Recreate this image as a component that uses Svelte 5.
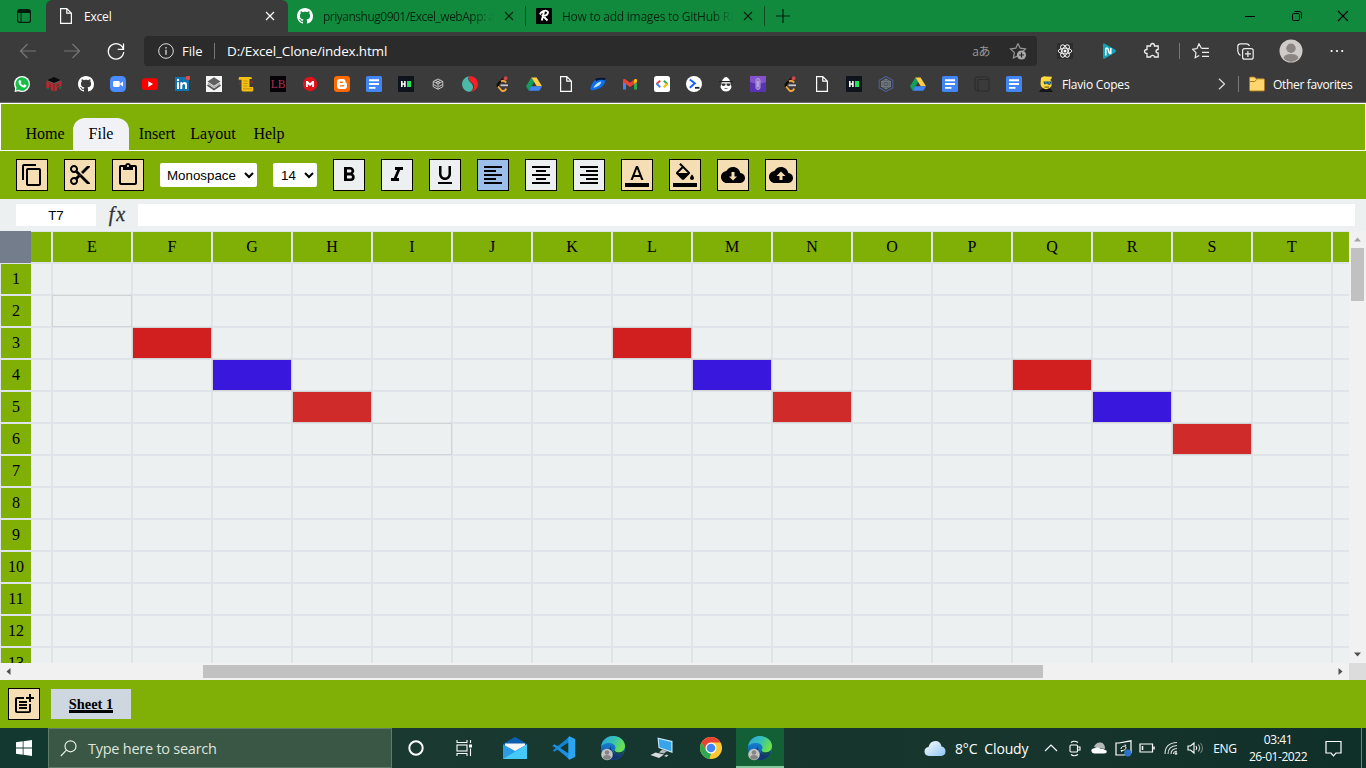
<script>
  const gh = '<path fill="currentColor" d="M8 0C3.58 0 0 3.58 0 8c0 3.54 2.29 6.53 5.47 7.59.4.07.55-.17.55-.38 0-.19-.01-.82-.01-1.49-2.01.37-2.53-.49-2.69-.94-.09-.23-.48-.94-.82-1.13-.28-.15-.68-.52-.01-.53.63-.01 1.08.58 1.23.82.72 1.21 1.87.87 2.33.66.07-.52.28-.87.51-1.07-1.78-.2-3.64-.89-3.64-3.95 0-.87.31-1.59.82-2.15-.08-.2-.36-1.02.08-2.12 0 0 .67-.21 2.2.82.64-.18 1.32-.27 2-.27s1.36.09 2 .27c1.53-1.04 2.2-.82 2.2-.82.44 1.1.16 1.92.08 2.12.51.56.82 1.27.82 2.15 0 3.07-1.87 3.75-3.65 3.95.29.25.54.73.54 1.48 0 1.07-.01 1.93-.01 2.2 0 .21.15.46.55.38A8.01 8.01 0 0 0 16 8c0-4.42-3.58-8-8-8z"/>';
  const page = '<path fill="none" stroke="#fff" stroke-width="1.2" d="M2.6.6h6.2l4.6 4.6v10.200H2.600zM8.800.6v4.600h4.600"/>';
  const docs = '<rect width="16" height="16" rx="1.500" fill="#4285f4"/><path stroke="#fff" stroke-width="1.900" d="M3 4.200h10M3 8h10M3 11.900h6.500"/>';
  const drive = '<path fill="#12a05c" d="M5.400 1.500 8 6 2.800 14.800 0 10.300z"/><path fill="#ffcf48" d="M5.400 1.500h5.200L16 10.300h-5.200z"/><path fill="#4285f4" d="M5.200 10.300H16l-2.700 4.500H2.800z"/>';
  const leet = '<path fill="none" stroke="#0a0a0a" stroke-width="2" d="M11 1 4.500 7.500Q2.800 9.500 4 11"/><path fill="none" stroke="#f2a33a" stroke-width="1.900" d="m4 10.500 3.200 3.700q2 1.800 4-.2l1.200-1.300M7 5.500q2.500-1.800 5.200 1"/><path stroke="#c8c8c8" stroke-width="1.800" d="M6.500 9.300h7.500"/><circle cx="11.500" cy="2.300" r="2" fill="#d24848"/>';
  const hr = '<rect width="16" height="16" fill="#0e141e"/><path fill="#fff" d="M3 5h1.600v2.200h1.500V5h1.600v6H6.100V8.700H4.600V11H3z"/><rect x="9" y="5" width="4" height="6" fill="#1ee65a"/>';

  const bookmarks = [
    '<circle cx="8" cy="8" r="8" fill="#fff"/><path fill="#fff" d="M.5 16 1.500 11l4 4z"/><path fill="#16bd4a" d="M8 1.300a6.700 6.700 0 1 1-3.300 12.500l-3 .8.9-2.900A6.700 6.700 0 0 1 8 1.300z"/><path fill="#fff" d="M5.500 4.200q.8-.4 1.200.2l.7 1.700-.8 1q1 1.800 2.800 2.400l1-1.200 2 1q.2 1.500-1.400 2.200c-2.500.6-6.500-2.800-6.500-5.200 0-.9.500-1.700 1-2.100z"/>',
    '<path fill="#0b0b0b" d="m8 1 7 3.200L8 7 1 4.200z"/><path fill="#b8282e" d="M.3 5 7.600 8v7.600l-2.700-1.400v-3l-1.800-.8v3L.3 12zM15.700 5 8.400 8v7.600l2.600-1.300v-2.500l4.700-2.200z"/><path fill="#3b3b3b" d="m3 8 2.200.9v1L3 9zM10.500 9l2.500-1v1.500l-2.500 1z"/><path fill="#1a6b3c" d="m.3 12 2.800 1.400v-1.500zM13 11v2.600l2.700-1.500V10z"/><path stroke="#888" stroke-width=".5" fill="none" d="m1 4.500 7 3 7-3"/>',
    gh,
    '<rect width="16" height="16" rx="4.500" fill="#4a8cff"/><rect x="3" y="5" width="6.800" height="6" rx="1.400" fill="#fff"/><path fill="#fff" d="m10.200 7.500 2.800-2v5l-2.800-2z"/>',
    '<rect y="2.300" width="16" height="11.600" rx="3" fill="#f00"/><path fill="#fff" d="m6.300 5.300 4.700 2.800-4.700 2.800z"/>',
    '<rect x="1" y="1" width="14" height="14" fill="#1173b0"/><path fill="#fff" d="M3 6.300h2V13H3zM6.300 6.300h1.900v.9q1-1.100 2.500-1.100 2.300 0 2.300 2.800V13h-2V9.500q0-1.600-1.200-1.600T8.300 9.500V13h-2z"/><circle cx="4" cy="4" r="1.200" fill="#fff"/><circle cx="14" cy="2" r="2.300" fill="#e8453c"/>',
    '<rect width="16" height="16" fill="#f5f5f5"/><path fill="#5f5f5f" d="m8 1.200 6.500 4.300L8 9.800 1.500 5.500z"/><path fill="none" stroke="#555" stroke-width="1.600" d="m1.500 9 6.500 4.500L14.500 9"/><path fill="#aaa" d="m2 6.500 6 4 6-4v1.500l-6 4-6-4z"/>',
    '<path fill="#f4c013" d="M1 1h11.500q1.500 0 1.500 2h-2.500v8H15q1 4.500-1 4.500H5q-1.500 0-1.500-2V4H.7z"/><path stroke="#a87300" stroke-width=".6" fill="none" d="M5.500 5h4M5.500 7.500h4M5.500 10h4M5 12.800h9M1 3.800h3"/><path fill="#a02030" d="M13 5h2v2h-2zM1 7h1.500v1.500H1z"/>',
    '<rect width="16" height="16" fill="#050305"/><text x="8" y="12.200" text-anchor="middle" font-family="Liberation Serif, serif" font-size="11.500" fill="#b0305a">LB</text>',
    '<circle cx="8" cy="8" r="7.200" fill="#e3131b"/><path fill="#fff" d="M4 11V5h1.800L8 7.300 10.200 5H12v6h-1.800V8L8 10.200 5.800 8v3z"/>',
    '<rect width="16" height="16" rx="3" fill="#ff6a00"/><path fill="#fff" fill-rule="evenodd" d="M6 3h2.800C11 3 11.600 4.500 11.600 6.500q1.400.2 1.400 1.500v2.500c0 1.500-1 2.500-2.500 2.500h-5C4 13 3 12 3 10.500v-5C3 4 4 3 6 3zm0 2.600v1.300h2.800V5.600zM6 9.300v1.300h4.200V9.300z"/>',
    docs, hr,
    '<path fill="none" stroke="#d6d6d6" stroke-width=".9" d="m8 3 4.800 2.500v5.200L8 13.300l-4.800-2.600V5.500zM3.500 5.500 8 8l4.500-2.500M8 8v5M5.500 4.300 10 6.800M10.500 4.300 6 6.800M3.500 8.500 7 10.500M12.500 8.500 9 10.500"/>',
    '<path fill="#4cb8a8" d="M7 .2C2 1-.5 5.500.2 9.500 1 14 5 16 8 15.800 11.500 14 12 10 9.500 7.500S5 4 7 .2z"/><path fill="#fb1d24" d="M7.500.1C13 0 16.500 4.500 15.900 9c-.5 4-4 6.600-7 6.800 4-3 4-6.800 1.100-9S6 3 7.500.1z"/>',
    leet, drive, page,
    '<path fill="#0c6ff0" d="M.5 12Q3 2.500 11 2.300h5Q15 10 9 12.500t-8.500 1.200z"/><path fill="#06183a" d="M5 3q4-2 11-1l-1 2.500Q12 3 6 5z"/><path fill="#bfe6ff" d="M3.500 12Q5.500 6.500 11.500 5.500q-1 4.500-8 6.500z"/>',
    '<path fill="#4285f4" d="M1 4v9.500h3V7z"/><path fill="#34a853" d="M12 7v6.500h3V4z"/><path fill="#ea4335" d="M1 4.300Q1 2.500 3 3l5 3.700L13 3q2-.5 2 1.300v2L8 11 1 6.300z"/><path fill="#fbbc04" d="M12 4v3.800l3-2V4q-.5-1.500-2-1z"/>',
    '<rect width="16" height="16" rx="2.500" fill="#fff"/><path fill="none" stroke-width="2" stroke="#ea4335" d="M6.200 4.800 2.500 8"/><path fill="none" stroke-width="2" stroke="#4285f4" d="m2.500 7.500 3.700 3.700"/><path fill="none" stroke-width="2" stroke="#34a853" d="M9.800 4.800 13.500 8"/><path fill="none" stroke-width="2" stroke="#fbbc04" d="m13.500 7.500-3.700 3.700"/>',
    '<circle cx="8" cy="8" r="8" fill="#fff"/><path fill="none" stroke="#1463ff" stroke-width="2" d="m3.800 3.500 5 3.800-5 4.500"/><path stroke="#20242f" stroke-width="1.800" d="M9 11.800h4.500"/>',
    '<path fill="#fff" d="M4 5q4-8 8 0l1.500 6Q12 15.500 8 15.500T2.500 11z"/><path fill="#222" d="M1 5h14v1.200H1z"/><path fill="#333" d="M3.500 7.500h4v1.500q-2 2-4 0zM8.500 7.500h4v1.500q-2 2-4 0z"/><path stroke="#555" stroke-width=".8" d="M6.500 12.500h3"/>',
    '<rect width="16" height="16" fill="#5a33b5"/><path fill="#8453cc" d="M0 0h16v6q-8 3-16 0z"/><rect x="6" y="2.500" width="4" height="11" rx="2" fill="#8d74c8" stroke="#b9a4dc" stroke-width=".9"/><path stroke="#d5c8ec" d="M8 5v6"/>',
    leet, page, hr,
    '<path fill="none" stroke="#4c5f8f" stroke-width="1.100" d="m8 .5 6.800 3.800v7.500L8 15.500l-6.800-3.700V4.300z"/><path fill="none" stroke="#77808c" stroke-width=".8" d="m8 3 4.500 2.500v5L8 13l-4.500-2.500v-5zM3.500 5.500l9 5M12.500 5.500l-9 5M8 3v10M3.500 5.500h9l-4.500 7.500zM8 3l-4.500 7.500h9z"/>',
    drive, docs,
    '<path fill="none" stroke="#2d2d2d" stroke-width="1.200" d="M2.500 1h10q1.500 0 2.500 2v10q0 2-2 2H4q-3-1-3-3V3q0-2 1.500-2zM4 3.500h10M4 3.500v11"/>',
    docs,
    '<path fill="#151515" d="M1 16q2-4 7-4t7 4z"/><path fill="#ffd83b" d="M3 2q2-2.500 5.500-1.500L14 .8q-.5 3-2 3.200l1.500 1v5Q11 14 7 13 3 12 2.500 8z"/><path fill="#1b4f7a" d="M5.500 5.500h8v1l-1.500 2.200h-2L9 7.300l-1 1H6.200z"/><path fill="#3fa9e0" d="M7 6.300h1.500v1H7zM10.500 6.300H12v1.200h-1.500z"/><path fill="#7a5c10" d="M6.500 10.500h4.500v1.200H6.500z"/>'
  ];

  const tools = {
    copy: 'M16 1H4c-1.100 0-2 .9-2 2v14h2V3h12V1zm3 4H8c-1.100 0-2 .9-2 2v14c0 1.100.9 2 2 2h11c1.100 0 2-.9 2-2V7c0-1.100-.9-2-2-2zm0 16H8V7h11v14z',
    cut: 'M9.640 7.640c.23-.5.36-1.050.36-1.640 0-2.210-1.790-4-4-4S2 3.790 2 6s1.790 4 4 4c.59 0 1.140-.13 1.640-.36L10 12l-2.360 2.360C7.140 14.130 6.590 14 6 14c-2.210 0-4 1.790-4 4s1.790 4 4 4 4-1.790 4-4c0-.59-.13-1.140-.36-1.640L12 14l7 7h3v-1L9.640 7.640zM6 8c-1.100 0-2-.89-2-2s.9-2 2-2 2 .89 2 2-.9 2-2 2zm0 12c-1.100 0-2-.89-2-2s.9-2 2-2 2 .89 2 2-.9 2-2 2zm6-7.500c-.28 0-.5-.22-.5-.5s.22-.5.5-.5.5.22.5.5-.22.5-.5.5zM19 3l-6 6 2 2 7-7V3z',
    paste: 'M19 2h-4.180C14.400.84 13.300 0 12 0c-1.300 0-2.400.84-2.820 2H5c-1.100 0-2 .9-2 2v16c0 1.100.9 2 2 2h14c1.100 0 2-.9 2-2V4c0-1.100-.9-2-2-2zm-7 0c.55 0 1 .45 1 1s-.45 1-1 1-1-.45-1-1 .45-1 1-1zm7 18H5V4h2v3h10V4h2v16z',
    bold: 'M15.600 10.790c.97-.67 1.650-1.770 1.650-2.790 0-2.260-1.750-4-4-4H7v14h7.040c2.090 0 3.710-1.700 3.710-3.790 0-1.520-.86-2.820-2.150-3.420zM10 6.500h3c.83 0 1.500.67 1.500 1.500s-.67 1.500-1.500 1.500h-3v-3zm3.500 9H10v-3h3.500c.83 0 1.500.67 1.500 1.500s-.67 1.500-1.500 1.500z',
    italic: 'M10 4v3h2.210l-3.420 8H6v3h8v-3h-2.210l3.420-8H18V4z',
    underline: 'M12 17c3.310 0 6-2.690 6-6V3h-2.500v8c0 1.930-1.570 3.500-3.500 3.500S8.500 12.930 8.500 11V3H6v8c0 3.310 2.690 6 6 6zm-7 2v2h14v-2H5z',
    left: 'M15 15H3v2h12v-2zm0-8H3v2h12V7zM3 13h18v-2H3v2zm0 8h18v-2H3v2zM3 3v2h18V3H3z',
    center: 'M7 15v2h10v-2H7zm-4 6h18v-2H3v2zm0-8h18v-2H3v2zm4-6v2h10V7H7zM3 3v2h18V3H3z',
    right: 'M3 21h18v-2H3v2zm6-4h12v-2H9v2zm-6-4h18v-2H3v2zm6-4h12V7H9v2zM3 3v2h18V3H3z',
    color: 'M11 3L5.500 17h2.250l1.120-3h6.250l1.120 3h2.250L13 3h-2zm-1.380 9L12 5.670 14.380 12H9.620zM0 20h24v4H0z',
    fill: 'M16.560 8.940L7.620 0 6.210 1.410l2.380 2.380-5.150 5.150c-.59.59-.59 1.540 0 2.120l5.500 5.500c.29.29.68.44 1.060.44s.77-.15 1.060-.44l5.500-5.500c.59-.58.59-1.530 0-2.120zM5.210 10L10 5.210 14.790 10H5.210zM19 11.500s-2 2.170-2 3.500c0 1.100.9 2 2 2s2-.9 2-2c0-1.330-2-3.500-2-3.500zM0 20h24v4H0z',
    download: 'M19.350 10.040C18.670 6.590 15.640 4 12 4 9.110 4 6.600 5.640 5.350 8.040 2.340 8.360 0 10.910 0 14c0 3.310 2.690 6 6 6h13c2.760 0 5-2.240 5-5 0-2.640-2.050-4.780-4.650-4.960zM16 13.500l-4 4-4-4h2.500V9h3v4.500z',
    upload: 'M19.350 10.040C18.670 6.590 15.640 4 12 4 9.110 4 6.600 5.640 5.350 8.040 2.340 8.360 0 10.910 0 14c0 3.310 2.690 6 6 6h13c2.760 0 5-2.240 5-5 0-2.640-2.050-4.780-4.650-4.960zM13.500 13v4h-3v-4H7.500L12 8.500l4.500 4.500z',
    add: 'M17 19.220H5V7h7V5H5c-1.100 0-2 .9-2 2v12c0 1.100.9 2 2 2h12c1.100 0 2-.9 2-2v-7h-2v7.220zM19 2h-2v3h-3c.01.01 0 2 0 2h3v2.990c.01.01 2 0 2 0V7h3V5h-3V2zM7 9h8v2H7zM7 12v2h8v-2h-3zM7 15h8v2H7z'
  };

  const cols = ['D', ...'EFGHIJKLMNOPQRST', 'U'];
  const rows = Array.from({ length: 13 }, (_, i) => i + 1);
  const cells = {
    E2: 'seen', I6: 'seen',
    F3: 'red', L3: 'red', Q4: 'red',
    G4: 'blue', M4: 'blue', R5: 'blue',
    H5: 'brick', N5: 'brick', S6: 'brick'
  };
  const menus = ['Home', 'File', 'Insert', 'Layout', 'Help'];
</script>

{#snippet tool(name, kind)}
  <button class="tool {kind}" aria-label={name}><svg width="24" height="24" viewBox="0 0 24 24"><path d={tools[name]} /></svg></button>
{/snippet}

{#snippet close(color)}
  <svg class="x" width="10" height="10" viewBox="0 0 10 10"><path d="m1 1 8 8M9 1 1 9" stroke={color} stroke-width="1.200" /></svg>
{/snippet}

{#snippet edge()}
  <svg width="26" height="26" viewBox="0 0 26 26">
    <defs>
      <linearGradient id="ea" x1="0" y1="0" x2="1" y2=".4"><stop offset="0" stop-color="#2aa5e0" /><stop offset=".55" stop-color="#35c1b4" /><stop offset="1" stop-color="#6be04c" /></linearGradient>
      <linearGradient id="eb" x1="0" y1="0" x2="0" y2="1"><stop offset="0" stop-color="#1b8fe0" /><stop offset="1" stop-color="#0c4fa4" /></linearGradient>
    </defs>
    <circle cx="13" cy="13" r="12" fill="url(#eb)" />
    <path fill="url(#ea)" d="M1 12C2 5 7 1 13 1c7 0 12 4.600 12 10 0 4-3 6.500-6.500 6.500-3 0-4.500-1.500-3.800-2.700C17 12 14 8 9.500 8 5.500 8 2 9.500 1 12z" />
    <path fill="#14376f" d="M11 11c-1 4 2 8 8 8.500 2 0 3.500-.5 4.500-1-2 3.500-6 6.500-10 6.500C8 24 7.500 15 11 11z" />
    <path fill="#16483a" d="M14.500 15.500q1 2 4 2 3.500 0 5.500-2l-1 3q-4 2-7 0t-1.500-3z" />
    <circle cx="7" cy="19.500" r="5.800" fill="#c4c4c4" /><circle cx="7" cy="17.500" r="2.300" fill="#858585" /><path fill="#858585" d="M3 23q0-3 4-3t4 3q-4 3.500-8 0z" />
  </svg>
{/snippet}

<div class="screen">
  <div class="tabs">
    <div class="tabmenu"><svg width="16" height="16" viewBox="0 0 16 16"><rect x="1.600" y="1.600" width="12.800" height="12.800" rx="2" fill="none" stroke="#08200f" stroke-width="1.200" /><path d="M2 2h12v3H2z" fill="#041a0b" /><path d="M5 5v9.500" stroke="#08200f" /></svg></div>
    <div class="tab active"><svg width="16" height="16" viewBox="0 0 16 16">{@html page}</svg><span class="t1">Excel</span>{@render close('#fff')}</div>
    <div class="tab second"><svg width="16" height="16" viewBox="0 0 16 16" color="#fff">{@html gh}</svg><span class="fade t2">priyanshug0901/Excel_webApp: a</span>{@render close('#05230f')}</div>
    <div class="tab third"><svg width="16" height="16" viewBox="0 0 16 16"><rect width="16" height="16" rx="1" fill="#000" /><path d="M5 4.500q5-3.500 7-.5 0 3.500-5 4l4.500 4.500M8 3.500 5.800 12.500M4 6.500 5 4.500" stroke="#fff" stroke-width="1.900" fill="none" /></svg><span class="fade t3">How to add images to GitHub RE</span>{@render close('#05230f')}</div>
    <svg class="plus" width="14" height="14" viewBox="0 0 14 14"><path d="M7 0v14M0 7h14" stroke="#05230f" stroke-width="1.200" /></svg>
    <div class="wins">
      <svg width="12" height="12" viewBox="0 0 12 12"><path d="M1 6.500h10" stroke="#000" /></svg>
      <svg width="12" height="12" viewBox="0 0 12 12" fill="none" stroke="#000"><rect x="1.500" y="3.500" width="7" height="7" rx="1.200" /><path d="M3.500 1.500h5q2 0 2 2v5" /></svg>
      <svg width="12" height="12" viewBox="0 0 12 12"><path d="m1 1 10 10M11 1 1 11" stroke="#000" stroke-width="1.100" /></svg>
    </div>
  </div>

  <div class="nav">
    <div class="navl">
      <svg width="18" height="16" viewBox="0 0 18 16"><path d="M17 8H1.500M8.500 1l-7 7 7 7" fill="none" stroke="#777" stroke-width="1.200" /></svg>
      <svg width="18" height="16" viewBox="0 0 18 16"><path d="M1 8h15.500M9.500 1l7 7-7 7" fill="none" stroke="#777" stroke-width="1.200" /></svg>
      <svg width="18" height="18" viewBox="0 0 18 18"><path d="M16.500 7.500a7.700 7.700 0 1 0 .2 2.500M16.500 1.500v5.800h-5.800" fill="none" stroke="#fff" stroke-width="1.300" /></svg>
    </div>
    <div class="address">
      <svg width="16" height="16" viewBox="0 0 16 16"><circle cx="8" cy="8" r="7.300" fill="none" stroke="#ddd" /><path d="M8 6.800v5M8 4v1.500" stroke="#ddd" stroke-width="1.300" /></svg>
      <span class="file">File</span><i class="bar"></i><span class="url">D:/Excel_Clone/index.html</span>
      <span class="lang">aあ</span>
      <svg class="favadd" width="18" height="18" viewBox="0 0 18 18"><path d="m9 1.500 2.200 4.700 5.300.7-3 3M9 1.500 6.800 6.200l-5.300.7 3.900 3.700-1 5.400 4-2" fill="none" stroke="#999" stroke-width="1.200" /><circle cx="12.500" cy="13" r="4.600" fill="#a8a8a8" /><path d="M12.500 10.500v5M10 13h5" stroke="#2b2b2b" stroke-width="1.200" /></svg>
    </div>
    <div class="slot" style="width:56px"><svg width="16" height="16" viewBox="0 0 16 16"><rect width="16" height="16" fill="#2d2d2d" /><g fill="none" stroke="#eee" stroke-width="1"><ellipse cx="8" cy="8" rx="6.800" ry="2.800" /><ellipse cx="8" cy="8" rx="6.800" ry="2.800" transform="rotate(60 8 8)" /><ellipse cx="8" cy="8" rx="6.800" ry="2.800" transform="rotate(120 8 8)" /></g><circle cx="8" cy="8" r="1.500" fill="#fff" /></svg></div>
    <div class="slot" style="width:32px"><svg width="16" height="16" viewBox="0 0 16 16"><path d="M2 1.500q0-1.500 1.500-1L14 6.500q2 1.500 0 3L4 15.500q-2 .8-2-1z" fill="#13a3b8" /><path d="M4.800 12.500v-7q2-1.500 2.700 2t2.300 3V5" fill="none" stroke="#fff" stroke-width="1.500" /></svg></div>
    <div class="slot" style="width:54px"><svg width="18" height="18" viewBox="0 0 18 18"><path d="M4 4h3.500q0-2.500 2-2.500t2 2.500h3.700v3.500q-2.200.2-2.200 1.800t2.200 1.800V15h-3.700q-.2-1.700-1.900-1.700T7.500 15H4v-3.600q-2.500-.2-2.500-2T4 7.500z" fill="none" stroke="#eee" stroke-width="1.300" /></svg></div>
    <i class="bar"></i>
    <div class="slot" style="width:44px"><svg width="18" height="16" viewBox="0 0 18 16"><path d="M9.500 5.500 7 .8 5 5.500l-4.300.8L4 9.700l-.8 5 4-2.200M9.800 5.300h7M10 9.300h7M10 13.300h7" fill="none" stroke="#eee" stroke-width="1.200" /></svg></div>
    <div class="slot" style="width:45px"><svg width="17" height="17" viewBox="0 0 17 17"><path d="M3.500 12.500Q1 11 .8 8V3Q1 .8 3.500.8h6q2.500 0 2.800 2.200" fill="none" stroke="#eee" stroke-width="1.200" /><rect x="5.600" y="5.600" width="10.600" height="10.600" rx="2" fill="none" stroke="#eee" stroke-width="1.200" /><path d="M10.900 8v6M8 10.900h6" stroke="#eee" stroke-width="1.200" /></svg></div>
    <div class="slot" style="width:46px"><svg width="24" height="24" viewBox="0 0 24 24"><circle cx="12" cy="12" r="11.500" fill="#cfcbc8" /><circle cx="12" cy="9.200" r="4.700" fill="#8b8684" /><path d="M4.500 19q1-4 7.500-4t7.500 4q-3 3.800-7.500 3.800T4.500 19z" fill="#8b8684" /></svg></div>
    <div class="slot" style="width:46px"><svg width="16" height="4" viewBox="0 0 16 4" fill="#fff"><circle cx="2.600" cy="2" r="1.100" /><circle cx="8" cy="2" r="1.100" /><circle cx="13.200" cy="2" r="1.100" /></svg></div>
  </div>

  <div class="favs">
    {#each bookmarks as b}<svg width="16" height="16" viewBox="0 0 16 16">{@html b}</svg>{/each}
    <span class="flavio">Flavio Copes</span>
    <svg class="more" width="8" height="12" viewBox="0 0 8 12"><path d="m1 .8 5.500 5.200L1 11.200" fill="none" stroke="#ddd" stroke-width="1.200" /></svg>
    <i class="bar"></i>
    <svg class="folder" width="16" height="16" viewBox="0 0 16 16"><path d="M.5 2q0-1 1-1h4l1.700 1.800h7.300q1 0 1 1V14q0 1-1 1h-13q-1 0-1-1z" fill="#ffd56d" stroke="#a87b1e" stroke-width=".9" /><path d="M.8 5.500h5L7.500 3.500" fill="none" stroke="#a87b1e" /></svg>
    <span class="other">Other favorites</span>
  </div>

  <div class="menu">
    {#each menus as m}<div class="item" class:on={m === 'File'}>{m}</div>{/each}
  </div>
  <div class="tools">
    {@render tool('copy', 'wheat')}{@render tool('cut', 'wheat')}{@render tool('paste', 'wheat')}
    <select class="family"><option>Monospace</option></select>
    <select class="size"><option>14</option></select>
    {@render tool('bold', '')}{@render tool('italic', '')}{@render tool('underline', '')}
    {@render tool('left', 'picked')}{@render tool('center', '')}{@render tool('right', '')}
    {@render tool('color', 'wheat')}{@render tool('fill', 'wheat')}{@render tool('download', 'wheat')}{@render tool('upload', 'wheat')}
  </div>
  <div class="formula"><div class="addr">T7</div><div class="fx"><span>f</span><span>x</span></div><div class="input"></div></div>

  <div class="sheet">
    <div class="grid">
      <div class="corner"></div>
      {#each cols as c, i}<div class="head" class:first={i === 0}>{i === 0 || i === 17 ? '' : c}</div>{/each}
      {#each rows as r}
        <div class="row">{r}</div>
        {#each cols as c, i}<div class="cell {cells[c + r] ?? ''}" class:first={i === 0}></div>{/each}
      {/each}
    </div>
    <div class="vbar">
      <svg width="9" height="5" viewBox="0 0 9 5"><path d="M1 4.500 4.500.5 8 4.500z" fill="#a3a3a3" /></svg>
      <div class="vthumb"></div>
      <svg class="down" width="9" height="5" viewBox="0 0 9 5"><path d="M1 .5 4.500 4.500 8 .5z" fill="#505050" /></svg>
    </div>
    <div class="hbar">
      <svg width="5" height="9" viewBox="0 0 5 9"><path d="M4.500 1 .5 4.500l4 3.500z" fill="#505050" /></svg>
      <div class="hthumb"></div>
      <svg class="rt" width="5" height="9" viewBox="0 0 5 9"><path d="M.5 1l4 3.500-4 3.500z" fill="#505050" /></svg>
    </div>
    <div class="joint"></div>
  </div>

  <div class="bottom">{@render tool('add', 'wheat')}<div class="sheettab"><span>Sheet 1</span></div></div>

  <div class="taskbar">
    <div class="task"><svg width="16" height="16" viewBox="0 0 16 16" fill="#fff"><path d="M0 2.300 6.700 1.300v6.300H0zM7.500 1.200 16 0v7.600H7.500zM0 8.400h6.700v6.300L0 13.700zM7.500 8.400H16V16l-8.500-1.200z" /></svg></div>
    <div class="search"><svg width="17" height="17" viewBox="0 0 17 17"><circle cx="10.500" cy="6.300" r="5.500" fill="none" stroke="#e8eeea" stroke-width="1.200" /><path d="M6.500 10.200.8 16" stroke="#e8eeea" stroke-width="1.200" /></svg><span>Type here to search</span></div>
    <div class="task"><svg width="18" height="18" viewBox="0 0 18 18"><circle cx="9" cy="9" r="6.700" fill="none" stroke="#fff" stroke-width="2" /></svg></div>
    <div class="task"><svg width="17" height="16" viewBox="0 0 17 16" fill="none" stroke="#fff" stroke-width="1.100"><path d="M1 0v2.500h10V0M1 16v-2.500h10V16M14.500 0v3M14.500 8.500V16" /><rect x="1" y="5" width="10" height="6" /><path d="M13 4.500h3v3h-3z" fill="#fff" stroke="none" /></svg></div>
    <div class="apps">
      <div class="task"><svg width="26" height="24" viewBox="0 0 26 24"><path d="M1 8 13 .8 25 8v5H1z" fill="#0a5fae" /><path d="M3 7.500h20V14l-10 3-10-3z" fill="#f4f6f8" /><path d="M1 8.200 13 15 25 8.200V23H1z" fill="#2b9be6" /><path d="m25 8.200-24 14.800h24z" fill="#45c9f6" /></svg></div>
      <div class="task"><svg width="24" height="24" viewBox="0 0 24 24"><path d="M17.500.5 6 11.500 2.500 8.500.7 9.700v1.500L17.500 6z" fill="#0f78c4" /><path d="M17.500.5.7 14.500l1.800 1.300L17.500 5.800z" fill="#1384cf" /><path d="M.7 9.500 17.500 23.500V18L2.500 8.300z" fill="#1c8fe0" /><path d="m17.300.3 5.900 2.700v18l-5.900 2.700-1-1V1.500z" fill="#2aa5f2" /></svg></div>
      <div class="task">{@render edge()}</div>
      <div class="task"><svg width="24" height="22" viewBox="0 0 24 22"><path d="m7.500.5 15 3.500v12L8.500 11z" fill="#c8e6f7" /><path d="m8.700 2 12.600 3v9.300L9.500 10.200z" fill="#37a5ec" /><path d="m12 12.500 5 1.500-3 2.500-5-1z" fill="#b4b9bd" /><path d="m.5 18 5-2.500 8.500 2-5 3.500z" fill="#d8dbde" /><path d="m14 19 2.500-1.500 2 .7-2 1.800z" fill="#c4c8cb" /></svg></div>
      <div class="task"><svg width="24" height="24" viewBox="0 0 24 24"><circle cx="12" cy="12" r="11" fill="#fcc934" /><path d="M2.500 6.500A11 11 0 0 1 21.500 6.500H12L7.200 14.700z" fill="#ea4335" /><path d="M2.500 6.500 7.200 14.800 12 17.500l-1.500 5.400A11 11 0 0 1 2.500 6.500z" fill="#2da94f" /><circle cx="12" cy="12" r="5.500" fill="#fff" /><circle cx="12" cy="12" r="4.300" fill="#4285f4" /></svg></div>
      <div class="task live">{@render edge()}</div>
    </div>
    <div class="tray">
      <div class="weather"><svg width="22" height="17" viewBox="0 0 22 17"><defs><linearGradient id="cl" x1="0" y1="0" x2="1" y2="1"><stop offset="0" stop-color="#fff" /><stop offset="1" stop-color="#8cc4f0" /></linearGradient></defs><path d="M5 16Q.5 15.500.5 11.500T4.500 7Q6 1 11.500 1q5 0 6 5.500 4 .8 4 5T17 16z" fill="url(#cl)" /></svg><span>8°C&nbsp; Cloudy</span></div>
      <div class="ti"><svg width="14" height="8" viewBox="0 0 14 8"><path d="m1 7 6-6 6 6" fill="none" stroke="#fff" stroke-width="1.200" /></svg></div>
      <div class="ti"><svg width="12" height="17" viewBox="0 0 12 17" fill="none" stroke="#fff" stroke-width="1.100"><path d="M2 2.500Q5 0 9 2.500M2 14.500q3 2.500 7 0" /><rect x="1" y="5" width="7.500" height="7" rx="1" /><path d="M8.500 7h2.500v3H8.500" /></svg></div>
      <div class="ti"><svg width="16" height="12" viewBox="0 0 16 12"><path d="M3 5Q5 0 9.500.5T14 7z" fill="#b5b9b7" /><path d="M3 11.500Q.3 11 .3 8.800T3.500 6.200q3-2 6 .6 3-.3 4 1 2.300.2 2.300 1.900t-2.600 1.800z" fill="#fff" /></svg></div>
      <div class="ti"><svg width="17" height="17" viewBox="0 0 17 17"><path d="M1 3h3L16 .8v12L9 15H1z" fill="none" stroke="#fff" stroke-width="1.200" /><path d="M6 9q0-3 5-3l-1-1.500M11 7q0 4-5 3.500L7 12" fill="none" stroke="#fff" /><circle cx="12.800" cy="13" r="3.600" fill="#2d74c9" /></svg></div>
      <div class="ti"><svg width="16" height="10" viewBox="0 0 16 10"><path d="M1 1h12.500v8H1z" fill="none" stroke="#fff" stroke-width="1.200" /><path d="M15 3.500v3M3.500 3v4" stroke="#fff" stroke-width="1.500" /></svg></div>
      <div class="ti"><svg width="14" height="14" viewBox="0 0 14 14" fill="none" stroke="#ddd" stroke-width="1.100"><path d="M1 13Q1 2 13 1.500M4 13Q4 5 13 4.500M7 13q0-5 6-5.500M9.500 13q0-2.500 3.500-2.700" /><circle cx="12" cy="12.500" r=".8" fill="#fff" /></svg></div>
      <div class="ti"><svg width="17" height="14" viewBox="0 0 17 14" fill="none" stroke="#fff" stroke-width="1.100"><path d="M1 5h2.500L7 2v10L3.500 9H1z" /><path d="M9 5q1.500 2 0 4" /><path d="M11.200 3.500q3 3.500 0 7" stroke="#bbb" /><path d="M13.500 2q4 5 0 10" stroke="#70807a" /></svg></div>
      <div class="eng">ENG</div>
      <div class="clock"><span>03:41</span><span>26-01-2022</span></div>
      <div class="note"><svg width="17" height="17" viewBox="0 0 17 17"><path d="M1 1.500h15V13h-5l-2.500 2.800L6 13H1z" fill="none" stroke="#fff" stroke-width="1.200" /></svg></div>
      <div class="peek"></div>
    </div>
  </div>
</div>

<style>
  :global(body) { margin: 0; overflow: hidden; }
  .screen { width: 1366px; height: 768px; overflow: hidden; display: flex; flex-direction: column; font-family: "Open Sans", "Noto Sans", "Noto Sans CJK JP", sans-serif; font-size: 12px; }
  .screen > div { flex: none; box-sizing: border-box; }
  svg { display: block; flex: none; }
  span { white-space: nowrap; }

  .tabs { height: 32px; background: #118a3e; display: flex; align-items: center; }
  .tabmenu { width: 46px; display: flex; justify-content: center; box-sizing: border-box; padding-left: 2px; }
  .tab { height: 32px; display: flex; align-items: center; box-sizing: border-box; }
  .tab .x { margin-left: auto; }
  .active { width: 242px; background: #3b3b3b; border-radius: 6px 6px 0 0; padding: 0 13px 0 12px; color: #fff; gap: 10px; }
  .second { width: 238px; padding: 0 12px 0 9px; gap: 10px; color: #06260f; position: relative; }
  .third { width: 239px; padding: 0 12px 0 10px; gap: 10px; color: #06260f; position: relative; }
  .second::after, .third::after { content: ""; position: absolute; right: 0; top: 6px; width: 1px; height: 20px; background: #0a4d24; }
  .fade { width: 173px; overflow: hidden; -webkit-mask-image: linear-gradient(90deg, #000 88%, transparent); mask-image: linear-gradient(90deg, #000 88%, transparent); }
  .plus { margin-left: 11px; }
  .wins { margin-left: auto; display: flex; gap: 34.500px; padding-right: 17px; }

  .nav { height: 38px; background: #3b3b3b; display: flex; align-items: center; }
  .navl { width: 144px; display: flex; align-items: center; gap: 26px; padding-left: 19px; box-sizing: border-box; }
  .address { width: 893px; height: 30px; background: #2b2b2b; border-radius: 4px; display: flex; align-items: center; padding: 0 10px 0 14px; box-sizing: border-box; color: #fff; }
  .file { font-size: 13px; margin-left: 8px; width: 32px; }
  .bar { display: block; width: 1px; height: 16px; background: #777; }
  .url { font-size: 13.500px; margin-left: 12px; }
  .lang { margin-left: auto; color: #999; font-size: 12px; letter-spacing: -.5px; }
  .favadd { margin-left: 19px; }
  .slot { display: flex; justify-content: center; }
  .bar + .slot { margin-left: -1px; }

  .favs { height: 35px; background: #3b3b3b; border-bottom: 1px solid #6a6a6a; display: flex; align-items: center; gap: 16px; padding: 0 0 4px 14px; color: #fff; }
  .screen > .favs { height: 33px; box-sizing: content-box; height: 28px; }
  .flavio { margin-left: -8px; width: 68px; }
  .more { margin-left: 72px; }
  .favs .bar { margin-left: -4px; }
  .folder { margin-left: -6px; }
  .other { margin-left: -8px; }

  .menu { height: 48px; background: #80af06; border: 1px solid #fff; display: flex; align-items: flex-end; padding-left: 16px; font: 16px "Liberation Serif", serif; color: #000; }
  .item { width: 56px; height: 32px; line-height: 31px; text-align: center; }
  .on { background: #f1f2f6; border-radius: 12px 12px 0 0; }
  .tools { height: 48px; background: #80af06; display: flex; align-items: center; gap: 16px; padding-left: 16px; }
  .tool { width: 32px; height: 32px; box-sizing: border-box; border: 1px solid #000; background: #ecf0f1; padding: 3px; margin: 0; border-radius: 0; flex: none; }
  .wheat { background: #f5deb3; }
  .picked { background: #9bbfea; }
  select { height: 24px; border: none; background: #fff; color: #000; font: 13.333px "Liberation Sans", sans-serif; padding: 0 0 0 3px; border-radius: 2px; margin: 0; }
  .family { width: 97px; }
  .size { width: 44px; padding-left: 4px; }

  .formula { height: 32px; background: #ecf0f1; display: flex; align-items: center; padding-left: 16px; font: 13.333px "Liberation Sans", sans-serif; color: #000; }
  .addr { width: 80px; height: 22px; line-height: 23px; background: #fff; text-align: center; }
  .fx { width: 42px; text-align: center; font: italic 20px/20px "Liberation Serif", serif; color: #333; display: flex; justify-content: center; gap: 2px; padding-bottom: 2px; box-sizing: border-box; -webkit-text-stroke: .3px #333; }
  .input { width: 1217px; height: 22px; background: #fff; }

  .sheet { height: 449px; display: grid; grid-template: 432px 17px / 1349px 17px; }
  .grid { overflow: hidden; background: #ecf0f1; display: grid; grid-template-columns: 31px 21px repeat(16, 80px) 17px; grid-auto-rows: 32px; font: 16px "Liberation Serif", serif; color: #000; }
  .grid > div { box-sizing: border-box; overflow: hidden; }
  .corner { background: #747d8c; }
  .head { background: #80af06; border: 1px solid #dfe4ea; text-align: center; line-height: 29px; }
  .row { background: #80af06; border: 1px solid #dfe4ea; border-right: 0; text-align: center; line-height: 30px; }
  .cell { border: 1px solid #dfe4ea; }
  .head.first, .cell.first { border-left: 0; }
  .head:nth-child(19), .cell:nth-child(19n) { border-right: 0; }
  .seen { border-color: #d3d3d3; }
  .red { background: #d11f1f; border-color: #d3d3d3; }
  .blue { background: #3a17dc; border-color: #d3d3d3; }
  .brick { background: #cf2b2b; border-color: #d3d3d3; }
  .vbar { background: #f1f1f1; display: flex; flex-direction: column; align-items: center; padding: 6px 0; }
  .vthumb { width: 13px; height: 53px; background: #c1c1c1; margin-top: 6px; }
  .down { margin-top: auto; }
  .hbar { background: #f1f1f1; display: flex; align-items: center; padding: 0 6px; }
  .hthumb { width: 840px; height: 13px; background: #c1c1c1; margin-left: 192px; }
  .rt { margin-left: auto; }
  .joint { background: #dcdcdc; }

  .bottom { height: 48px; background: #80af06; display: flex; align-items: center; padding-left: 8px; }
  .sheettab { width: 80px; height: 30px; margin-left: 11px; background: #ced6e0; display: flex; justify-content: center; align-items: center; font: bold 14.400px "Liberation Serif", serif; color: #000; }
  .sheettab span { border-bottom: 3px solid #000; line-height: 14px; height: 13px; margin-top: 2px; }

  .taskbar { height: 40px; background: linear-gradient(90deg, #12382f, #1a3a31 30%, #15362e 50%, #17352c 75%, #0f2f29); display: flex; color: #fff; }
  .task { width: 48px; height: 40px; display: flex; align-items: center; justify-content: center; box-sizing: border-box; }
  .search { width: 344px; box-sizing: border-box; border: 1px solid #5e7a6a; background: #3a5644; display: flex; align-items: center; padding-left: 11px; gap: 11px; font-size: 14.500px; letter-spacing: -.25px; color: #dde5df; }
  .apps { display: flex; gap: 1px; margin-left: 3px; }
  .live { background: #135f36; border-bottom: 2px solid #83c99d; }
  .live :global(svg) { position: relative; top: 1px; }
  .tray { display: flex; align-items: center; margin-left: auto; }
  .weather { width: 115px; display: flex; align-items: center; gap: 9px; font-size: 14px; letter-spacing: -.15px; }
  .ti { width: 24px; display: flex; justify-content: center; }
  .eng { width: 36px; text-align: center; font-size: 12px; letter-spacing: -.3px; }
  .clock { width: 70px; display: flex; flex-direction: column; align-items: center; line-height: 17px; letter-spacing: -.45px; }
  .note { width: 40px; display: flex; justify-content: center; }
  .peek { width: 13px; height: 40px; box-sizing: border-box; background: linear-gradient(#72857c, #72857c) 8px 0 / 1px 40px no-repeat; }

  .t1, .flavio { letter-spacing: -.2px; }
  .t2 { letter-spacing: -.5px; }
  .t3 { letter-spacing: -.25px; }
  .url { letter-spacing: -.16px; }
  .other { letter-spacing: -.33px; }
</style>
